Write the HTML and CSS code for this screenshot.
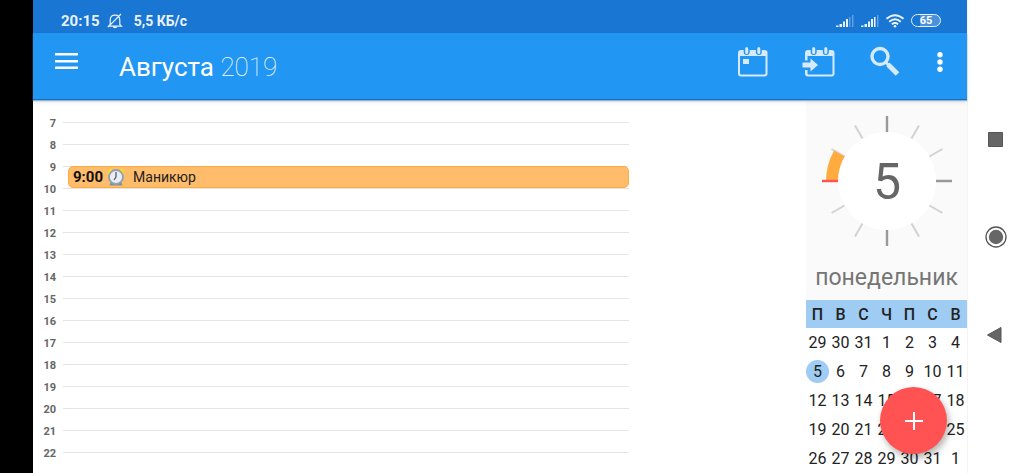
FILE: index.html
```html
<!DOCTYPE html>
<html lang="ru">
<head>
<meta charset="utf-8">
<meta name="viewport" content="width=device-width, initial-scale=1">
<title>Календарь</title>
<link rel="stylesheet" href="styles.css">
</head>
<body>
<div class="screen">
  <div class="app">
    <div class="status">
      <span>20:15</span>
      <svg class="bell" width="16" height="16" viewBox="0 0 16 16" fill="none" stroke="currentColor" stroke-width="1.200"><path d="M3.200 11.500V7.200C3.200 4 5.200 2.200 8 2.200s4.800 1.800 4.800 5v4.300l1.600 1.600H1.600zM6.300 13.800q1.700 1.600 3.400 0M1 14.200 14 1"/></svg>
      <span class="speed">5,5 КБ/с</span>
      <div class="signals">
        <svg width="19" height="14" viewBox="0 0 19 14" fill="currentColor"><path d="M1 13v-1.500h2.500V13zM4.500 13v-3H7v3zM8 13V7.500h2V13zM11 13V5h2v8z"/><path opacity=".35" d="M14 13V3h1.500v10zM17 13V1h1.500v12z"/></svg>
        <svg width="19" height="14" viewBox="0 0 19 14" fill="currentColor"><path d="M1 13v-1.500h2.500V13zM4.500 13v-3H7v3zM8 13V7.500h2V13zM11 13V5h2v8zM14 13V3h1.500v10z"/><path opacity=".35" d="M17 13V1h1.500v12z"/></svg>
        <svg width="20" height="14" viewBox="0 0 20 14" fill="none" stroke="currentColor" stroke-width="1.900"><path d="M1.500 4.800q8.500-7.200 17 0M4.200 7.700q5.800-4.800 11.600 0M6.900 10.300q3.100-2.400 6.200 0"/><circle cx="10" cy="12.300" r="1.300" fill="currentColor" stroke="none"/></svg>
        <span class="battery">65</span>
      </div>
    </div>
    <header class="toolbar">
      <button class="tool menu" aria-label="Меню"><svg width="24" height="18" viewBox="0 0 24 18" fill="currentColor"><path d="M0 1h23v2.500H0zM0 8h23v2.500H0zM0 14.500h23V17H0z"/></svg></button>
      <h1 class="title">Августа <span class="year">2019</span></h1>
      <button class="tool" aria-label="Сегодня"><svg width="32" height="32" viewBox="0 0 32 32"><path fill="currentColor" fill-rule="evenodd" d="M4 4h23.500a3 3 0 0 1 3 3v20.500a3 3 0 0 1-3 3H4a3 3 0 0 1-3-3V7a3 3 0 0 1 3-3zM3 10v17.500q0 1 1 1h23.500q1 0 1-1V10z"/><path fill="currentColor" d="M6 13h6v5H6z"/><path class="ring-gap" d="M9.700 3v3M21.800 3v3"/><path class="ring" d="M9.700 2.500v4M21.800 2.500v4"/></svg></button>
      <button class="tool" aria-label="Перейти к дате"><svg width="34" height="32" viewBox="0 0 34 32"><path fill="currentColor" fill-rule="evenodd" d="M6 4h23.500a3 3 0 0 1 3 3v20.500a3 3 0 0 1-3 3H6a3 3 0 0 1-3-3V24h2.500v3.500q0 1 1 1h23q1 0 1-1V10h-25v4.500H3V7a3 3 0 0 1 3-3z"/><path fill="currentColor" d="M.500 16.500H8.500V12.500L16 19l-7.500 6.500v-4H.500z"/><path class="ring-gap" d="M11.700 3v3M23.800 3v3"/><path class="ring" d="M11.700 2.500v4M23.800 2.500v4"/></svg></button>
      <button class="tool" aria-label="Поиск"><svg width="32" height="32" viewBox="0 0 32 32" fill="none" stroke="currentColor"><circle cx="11" cy="10.500" r="8" stroke-width="3.400"/><path d="m16.500 16 3 3" stroke-width="3"/><path d="m19 18.500 9.500 9.500" stroke-width="5"/></svg></button>
      <button class="tool more" aria-label="Ещё"><svg width="6" height="20" viewBox="0 0 6 20" fill="currentColor"><circle cx="3" cy="2.800" r="2.700"/><circle cx="3" cy="10" r="2.700"/><circle cx="3" cy="17.200" r="2.700"/></svg></button>
    </header>
    <main class="content">
      <ol class="hours">
        <li><span class="hour">7</span><div class="slot"></div></li>
        <li><span class="hour">8</span><div class="slot"></div></li>
        <li><span class="hour">9</span><div class="slot"><a class="event" href="#event"><b>9:00</b>
          <svg width="18" height="18" viewBox="0 0 18 18"><path d="M1 5 5 1.500M17 5 13 1.500" stroke="#f8d92f" stroke-width="3.500"/><path d="m4 13-1.500 4.500h13L14 13z" fill="#7e8f9f"/><circle cx="9" cy="9" r="7" fill="#e9eef4" stroke="#8fa1b2" stroke-width="1.800"/><path d="M9 4v5l-2 3" fill="none" stroke="#46525e" stroke-width="1.200"/></svg>
          <span>Маникюр</span></a></div></li>
        <li><span class="hour">10</span><div class="slot"></div></li>
        <li><span class="hour">11</span><div class="slot"></div></li>
        <li><span class="hour">12</span><div class="slot"></div></li>
        <li><span class="hour">13</span><div class="slot"></div></li>
        <li><span class="hour">14</span><div class="slot"></div></li>
        <li><span class="hour">15</span><div class="slot"></div></li>
        <li><span class="hour">16</span><div class="slot"></div></li>
        <li><span class="hour">17</span><div class="slot"></div></li>
        <li><span class="hour">18</span><div class="slot"></div></li>
        <li><span class="hour">19</span><div class="slot"></div></li>
        <li><span class="hour">20</span><div class="slot"></div></li>
        <li><span class="hour">21</span><div class="slot"></div></li>
        <li><span class="hour">22</span><div class="slot"></div></li>
      </ol>
      <aside class="side">
        <section class="day">
          <svg class="dial" width="132" height="132" viewBox="-66 -66 132 132">
            <circle r="49" fill="#fff"/>
            <g stroke="#d2d2d2" stroke-width="2"><path d="M0-49V-64" transform="rotate(30)"/><path d="M0-49V-64" transform="rotate(60)"/><path d="M0-49V-64" transform="rotate(120)"/><path d="M0-49V-64" transform="rotate(150)"/><path d="M0-49V-64" transform="rotate(210)"/><path d="M0-49V-64" transform="rotate(240)"/><path d="M0-49V-64" transform="rotate(300)"/><path d="M0-49V-64" transform="rotate(330)"/></g>
            <path d="M0-49V-65M0 49V65M49 0H65" stroke="#999" stroke-width="2.400"/>
            <path d="M-61 0A61 61 0 0 1-52.800-30.500L-42.400-24.500A49 49 0 0 0-49 0z" fill="#ffab40"/>
            <path d="M-65 0H-49" stroke="#ff5252" stroke-width="2.400"/>
            <text class="date" y="18" text-anchor="middle">5</text>
          </svg>
          <div class="weekday">понедельник</div>
        </section>
        <table class="month">
          <thead><tr><th>П</th><th>В</th><th>С</th><th>Ч</th><th>П</th><th>С</th><th>В</th></tr></thead>
          <tbody>
            <tr><td>29</td><td>30</td><td>31</td><td>1</td><td>2</td><td>3</td><td>4</td></tr>
            <tr><td class="today">5</td><td>6</td><td>7</td><td>8</td><td>9</td><td>10</td><td>11</td></tr>
            <tr><td>12</td><td>13</td><td>14</td><td>15</td><td>16</td><td>17</td><td>18</td></tr>
            <tr><td>19</td><td>20</td><td>21</td><td>22</td><td>23</td><td>24</td><td>25</td></tr>
            <tr><td>26</td><td>27</td><td>28</td><td>29</td><td>30</td><td>31</td><td>1</td></tr>
          </tbody>
        </table>
      </aside>
    </main>
    <button class="fab" aria-label="Добавить"><svg width="20" height="20" viewBox="0 0 20 20" stroke="currentColor" stroke-width="2"><path d="M10 1v18M1 10h18"/></svg></button>
  </div>
  <nav class="system">
    <button aria-label="Недавние"><svg width="22" height="22" viewBox="0 0 22 22"><path d="M3.500 4.500h14v14h-14z" fill="#666" stroke="#555"/></svg></button>
    <button aria-label="Домой"><svg width="22" height="22" viewBox="0 0 22 22"><circle cx="11" cy="11" r="10" fill="#fff" stroke="#555" stroke-width="1.300"/><circle cx="11" cy="11" r="7.200" fill="#666"/></svg></button>
    <button aria-label="Назад"><svg width="22" height="22" viewBox="0 0 22 22"><path d="M2.500 11 16 3.500v15z" fill="#666" stroke="#555"/></svg></button>
  </nav>
</div>
</body>
</html>
```

FILE: styles.css
```css
* { box-sizing: border-box; }

body {
  margin: 0;
  font-family: Roboto, "Noto Sans", sans-serif;
  color: #222;
  background: #fff;
}

button {
  padding: 0;
  border: 0;
  background: none;
  color: inherit;
  font: inherit;
  cursor: pointer;
}

svg { display: block; }

.screen {
  display: flex;
  min-height: 100vh;
  border-left: 33px solid #000;
}

.app {
  position: relative;
  flex: 1;
  display: flex;
  flex-direction: column;
}

.status {
  display: flex;
  align-items: center;
  height: 33px;
  padding: 8px 26px 0 28px;
  background: #1976d2;
  color: #e9f2fc;
  font-size: 15px;
  font-weight: 700;
}

.bell { margin: 0 11px 0 7px; }

.speed { font-size: 14px; }

.signals {
  display: flex;
  align-items: center;
  gap: 6px;
  margin-left: auto;
}

.battery {
  width: 30px;
  height: 13px;
  border: 1px solid #e9f2fc;
  border-radius: 7px;
  background: linear-gradient(90deg, transparent 0 30%, #4a90dc 30%);
  color: #fff;
  font-size: 11px;
  line-height: 12px;
  text-align: center;
}

.toolbar {
  position: relative;
  display: flex;
  align-items: center;
  height: 67px;
  padding: 0 24px 10px 22px;
  background: #2196f3;
  border-bottom: 1px solid #1a70b8;
  box-shadow: 0 1px 1px #8fb2da, 0 2px 4px rgba(0, 0, 0, .12);
  color: #fff;
}

.tool {
  margin-right: 33px;
  padding-top: 2px;
  color: #d6eafb;
}

.ring-gap,
.ring {
  fill: none;
  stroke-linecap: round;
}

.ring-gap {
  stroke: #2196f3;
  stroke-width: 6px;
}

.ring {
  stroke: currentColor;
  stroke-width: 3px;
}

.menu {
  margin-right: 40px;
  padding-top: 0;
  color: #fff;
}

.more {
  margin: 0 0 0 3px;
  color: #fff;
}

.title {
  flex: 1;
  margin: 0;
  padding-top: 12px;
  font-size: 26px;
  line-height: 32px;
  font-weight: 400;
}

.year { font-weight: 100; }

.content {
  flex: 1;
  display: flex;
}

.hours {
  flex: 1;
  display: grid;
  grid-auto-rows: 1fr;
  margin: 0;
  padding: 22px 177px 0 0;
  list-style: none;
}

.hours li {
  display: flex;
  gap: 7px;
}

.hour {
  width: 23px;
  height: 0;
  line-height: 4px;
  font-size: 11px;
  font-weight: 700;
  color: #666;
  text-align: right;
}

.slot {
  flex: 1;
  border-top: 1px solid #e4e4e4;
}

.event {
  display: flex;
  align-items: center;
  gap: 4px;
  height: 22px;
  margin: -1px 0 0 5px;
  padding: 0 4px;
  border: 1px solid #ffab40;
  border-radius: 5px;
  background: #ffbc6b;
  color: #222;
  font-size: 14px;
  text-decoration: none;
}

.event b { font-size: 15px; color: #111; }

.event span { margin-left: 4px; }

.side {
  width: 161px;
  background: #fff;
}

.day {
  display: flex;
  flex-direction: column;
  align-items: center;
  height: 200px;
  padding-top: 15px;
  background: #fafafa;
}

.date {
  font-size: 50px;
  fill: #666;
}

.weekday {
  margin-top: 15px;
  font-size: 23px;
  line-height: 32px;
  color: #757575;
}

.month {
  width: 100%;
  height: 172px;
  table-layout: fixed;
  border-collapse: collapse;
  font-size: 16px;
  text-align: center;
}

.month th,
.month td {
  padding: 2px 0 0;
  line-height: 24px;
}

.month th {
  height: 28px;
  background: #9fccf3;
  font-weight: 500;
}

.today { background: radial-gradient(circle 12px, #9fccf3 11px, transparent 12px); }

.fab {
  position: absolute;
  right: 20px;
  bottom: 20px;
  display: grid;
  place-items: center;
  width: 67px;
  height: 67px;
  border-radius: 50%;
  background: #ff5252;
  box-shadow: 2px 4px 7px rgba(0, 0, 0, .3);
  color: #fff;
}

.system {
  display: flex;
  flex-direction: column;
  align-items: center;
  justify-content: center;
  gap: 76px;
  width: 57px;
  border-left: 1px solid #f4f4f4;
  background: #fff;
}
```
